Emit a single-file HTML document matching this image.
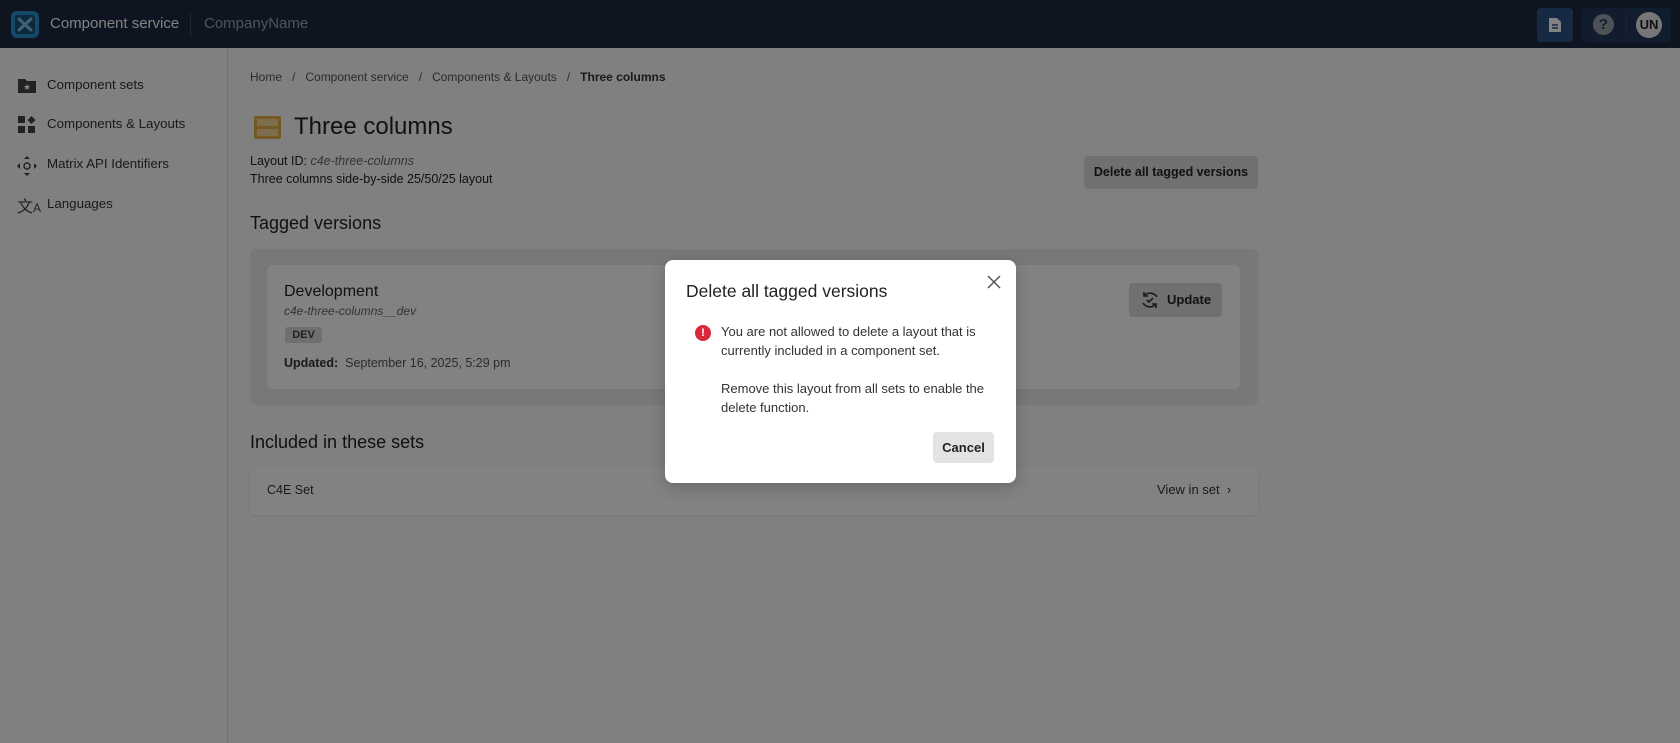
<!DOCTYPE html>
<html><head><meta charset="utf-8"><style>
*{box-sizing:border-box;margin:0;padding:0}
body{width:1680px;height:743px;overflow:hidden;font-family:"Liberation Sans",sans-serif;background:#fbfbfb;color:#222;position:relative}
.abs{position:absolute}
.hdr{left:0;top:0;width:1680px;height:48px;background:#1c2a42}
.side{left:0;top:48px;width:228px;height:695px;background:#fbfbfb;border-right:1px solid #ddd}
.si{position:absolute;left:47px;font-size:13.3px;color:#333}
.t{position:absolute;white-space:nowrap}
.ov{left:0;top:0;width:1680px;height:743px;background:rgba(0,0,0,.49)}
</style></head><body>
<div class="abs hdr">
 <div class="abs" style="left:11px;top:11px;width:28px;height:27px;border-radius:6px;background:#2a8fd0"></div>
 <svg class="abs" style="left:14px;top:14px" width="22" height="21" viewBox="0 0 22 21"><rect x="1" y="1" width="20" height="19" rx="3" fill="#1d4f7a"/><path d="M5 5 L17 16 M17 5 L5 16" stroke="#7cc4f0" stroke-width="3" stroke-linecap="round"/></svg>
 <div class="t" style="left:50px;top:15px;font-size:15px;color:#fff">Component service</div>
 <div class="abs" style="left:190px;top:12px;width:1px;height:25px;background:#3a4760"></div>
 <div class="t" style="left:204px;top:15px;font-size:15px;color:#9aa6ba">CompanyName</div>
 <div class="abs" style="left:1537px;top:8px;width:36px;height:34px;border-radius:4px;background:#2b5584"></div>
 <svg class="abs" style="left:1548px;top:17px" width="14" height="16" viewBox="0 0 14 16"><path d="M1 1h8l4 4v10H1z" fill="#fff"/><path d="M4 8h6M4 11h6" stroke="#2b5584" stroke-width="1.5"/></svg>
 <div class="abs" style="left:1582px;top:8px;width:89px;height:34px;border-radius:4px;background:#22395a"></div>
 <div class="abs" style="left:1593px;top:14px;width:21px;height:21px;border-radius:50%;background:#9aa0a8;color:#22395a;font-weight:bold;font-size:15px;text-align:center;line-height:21px">?</div>
 <div class="abs" style="left:1626px;top:14px;width:1px;height:22px;background:#2e4870"></div>
 <div class="abs" style="left:1636px;top:12px;width:26px;height:26px;border-radius:50%;background:#e8e8e8;color:#222;font-weight:bold;font-size:13px;text-align:center;line-height:26px">UN</div>
</div>
<div class="abs side">
 <svg class="abs" style="left:18px;top:30px" width="18" height="15"><path d="M0 1h7l2 2h9v12H0z" fill="#444"/><path d="M9 6l1 2 2 .3-1.5 1.4.4 2L9 10.7 7.1 11.7l.4-2L6 8.3 8 8z" fill="#fff"/></svg>
 <div class="si" style="top:29px">Component sets</div>
 <svg class="abs" style="left:18px;top:68px" width="18" height="18"><rect x="0" y="0" width="7" height="7" fill="#444"/><path d="M13.5 0l4 4-4 4-4-4z" fill="#444"/><rect x="0" y="10" width="7" height="7" fill="#444"/><rect x="10" y="10" width="7" height="7" fill="#444"/></svg>
 <div class="si" style="top:68px">Components &amp; Layouts</div>
 <svg class="abs" style="left:17px;top:108px" width="20" height="20"><circle cx="10" cy="10" r="3" fill="none" stroke="#444" stroke-width="1.5"/><path d="M10 0l3 3h-6zM10 20l3-3h-6zM0 10l3-3v6zM20 10l-3-3v6z" fill="#444"/></svg>
 <div class="si" style="top:108px">Matrix API Identifiers</div>
 <div class="t" style="left:17px;top:145px;font-size:16px;color:#444">文<span style="font-size:12px">A</span></div>
 <div class="si" style="top:148px">Languages</div>
</div>
<div class="t" style="left:250px;top:70px;font-size:12px;color:#555">Home &nbsp; / &nbsp; Component service &nbsp; / &nbsp; Components &amp; Layouts &nbsp; / &nbsp; <b style="color:#333">Three columns</b></div>
<div class="abs" style="left:254px;top:116px;width:27px;height:23px;border-radius:2px;background:#e8ad4a"></div>
<div class="abs" style="left:257px;top:119px;width:21px;height:7px;background:#f6d79a"></div>
<div class="abs" style="left:257px;top:129px;width:21px;height:7px;background:#f6d79a"></div>
<div class="t" style="left:294px;top:113px;font-size:24px;color:#222">Three columns</div>
<div class="t" style="left:250px;top:154px;font-size:12.5px;color:#222">Layout ID: <i style="color:#666">c4e-three-columns</i></div>
<div class="t" style="left:250px;top:172px;font-size:12.5px;color:#222">Three columns side-by-side 25/50/25 layout</div>
<div class="abs" style="left:1084px;top:156px;width:174px;height:33px;border-radius:4px;background:#dcdcdc;font-size:12.5px;font-weight:bold;text-align:center;line-height:33px;color:#222">Delete all tagged versions</div>
<div class="t" style="left:250px;top:213px;font-size:18px;color:#222">Tagged versions</div>
<div class="abs" style="left:250px;top:249px;width:1008px;height:156px;border-radius:6px;background:#ececec"></div>
<div class="abs" style="left:267px;top:265px;width:973px;height:124px;border-radius:6px;background:#fff"></div>
<div class="t" style="left:284px;top:283px;font-size:16px;color:#222">Development</div>
<div class="t" style="left:284px;top:304px;font-size:12px;color:#666;font-style:italic">c4e-three-columns__dev</div>
<div class="abs" style="left:285px;top:327px;width:37px;height:16px;border-radius:3px;background:#dadada;font-size:11px;font-weight:bold;text-align:center;line-height:16px;color:#444">DEV</div>
<div class="t" style="left:284px;top:356px;font-size:12.5px;color:#555"><b style="color:#333">Updated:</b>&nbsp; September 16, 2025, 5:29 pm</div>
<div class="abs" style="left:1129px;top:283px;width:93px;height:34px;border-radius:4px;background:#dcdcdc"></div>
<svg class="abs" style="left:1140px;top:290px" width="20" height="20" viewBox="0 0 20 20" fill="none" stroke="#333" stroke-width="1.6"><path d="M4 6a8 8 0 0 1 13 1M16 14a8 8 0 0 1-13-1"/><path d="M4 2v4h4M16 18v-4h-4"/><path d="M7 10l2 2 4-4"/></svg>
<div class="t" style="left:1167px;top:292px;font-size:13px;font-weight:bold;color:#222">Update</div>
<div class="t" style="left:250px;top:432px;font-size:18px;color:#222">Included in these sets</div>
<div class="abs" style="left:250px;top:467px;width:1008px;height:48px;border-radius:5px;background:#fff;box-shadow:0 1px 2px rgba(0,0,0,.08)"></div>
<div class="t" style="left:267px;top:483px;font-size:12.5px;color:#333">C4E Set</div>
<div class="t" style="left:1157px;top:482px;font-size:13px;color:#333">View in set &nbsp;›</div>
<div class="abs ov"></div>
<div class="abs" style="left:665px;top:260px;width:351px;height:223px;border-radius:8px;background:#fff;box-shadow:0 4px 16px rgba(0,0,0,.2)">
 <div class="t" style="left:21px;top:21px;font-size:17.5px;color:#222">Delete all tagged versions</div>
 <svg class="abs" style="left:322px;top:15px" width="14" height="14"><path d="M1 1l12 12M13 1L1 13" stroke="#555" stroke-width="1.5"/></svg>
 <div class="abs" style="left:30px;top:65px;width:16px;height:16px;border-radius:50%;background:#d9283a;color:#fff;font-size:11px;font-weight:bold;text-align:center;line-height:16px">!</div>
 <div class="abs" style="left:56px;top:62px;width:270px;font-size:13px;line-height:19px;color:#333">You are not allowed to delete a layout that is currently included in a component set.<br><br style="line-height:14px">Remove this layout from all sets to enable the delete function.</div>
 <div class="abs" style="left:268px;top:172px;width:61px;height:31px;border-radius:4px;background:#e3e3e3;font-size:13px;font-weight:bold;text-align:center;line-height:31px;color:#222">Cancel</div>
</div>
</body></html>
